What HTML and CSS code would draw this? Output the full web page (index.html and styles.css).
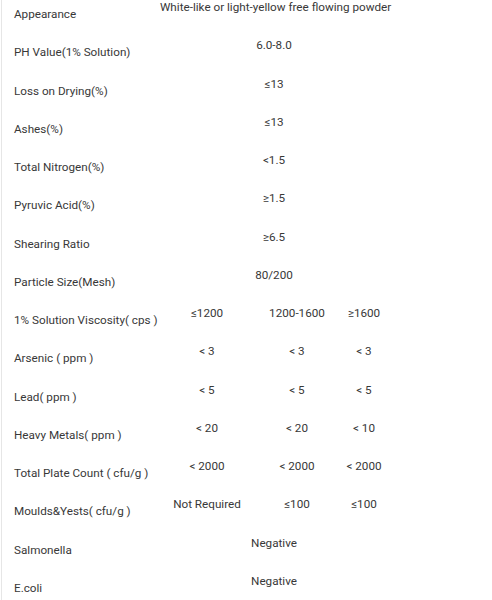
FILE: index.html
```html
<!DOCTYPE html>
<html lang="en">
<head>
<meta charset="utf-8">
<title>Specifications</title>
<link rel="stylesheet" href="styles.css">
</head>
<body>
<div class="spec">
  <div class="row"><div class="label">Appearance</div><div class="val span">White-like or light-yellow free flowing powder</div></div>
  <div class="row"><div class="label">PH Value(1% Solution)</div><div class="val span">6.0-8.0</div></div>
  <div class="row"><div class="label">Loss on Drying(%)</div><div class="val span">≤13</div></div>
  <div class="row"><div class="label">Ashes(%)</div><div class="val span">≤13</div></div>
  <div class="row"><div class="label">Total Nitrogen(%)</div><div class="val span">&lt;1.5</div></div>
  <div class="row"><div class="label">Pyruvic Acid(%)</div><div class="val span">≥1.5</div></div>
  <div class="row"><div class="label">Shearing Ratio</div><div class="val span">≥6.5</div></div>
  <div class="row"><div class="label">Particle Size(Mesh)</div><div class="val span">80/200</div></div>
  <div class="row"><div class="label">1% Solution Viscosity( cps )</div><div class="val">≤1200</div><div class="val">1200-1600</div><div class="val">≥1600</div></div>
  <div class="row"><div class="label">Arsenic ( ppm )</div><div class="val">&lt; 3</div><div class="val">&lt; 3</div><div class="val">&lt; 3</div></div>
  <div class="row"><div class="label">Lead( ppm )</div><div class="val">&lt; 5</div><div class="val">&lt; 5</div><div class="val">&lt; 5</div></div>
  <div class="row"><div class="label">Heavy Metals( ppm )</div><div class="val">&lt; 20</div><div class="val">&lt; 20</div><div class="val">&lt; 10</div></div>
  <div class="row"><div class="label">Total Plate Count ( cfu/g )</div><div class="val">&lt; 2000</div><div class="val">&lt; 2000</div><div class="val">&lt; 2000</div></div>
  <div class="row"><div class="label">Moulds&amp;Yests( cfu/g )</div><div class="val">Not Required</div><div class="val">≤100</div><div class="val">≤100</div></div>
  <div class="row"><div class="label">Salmonella</div><div class="val span">Negative</div></div>
  <div class="row"><div class="label">E.coli</div><div class="val span">Negative</div></div>
</div>
</body>
</html>
```
FILE: styles.css
```css
html, body {
  margin: 0;
  padding: 0;
  background: #fff;
}
body {
  font-family: Roboto, "Liberation Sans", Arial, sans-serif;
  font-size: 11.7px;
  color: #383838;
}
.spec {
  margin-left: 1px;
  border-left: 1px solid #e6e6e6;
  width: 478px;
}
.row {
  display: grid;
  grid-template-columns: 158px 94px 86px 48px;
  height: 38.27px;
}
.label {
  padding-left: 12px;
  padding-top: 7px;
  line-height: 14px;
  white-space: nowrap;
}
.val {
  text-align: center;
  line-height: 14px;
  white-space: nowrap;
}
.span {
  grid-column: 2 / 5;
}
```
